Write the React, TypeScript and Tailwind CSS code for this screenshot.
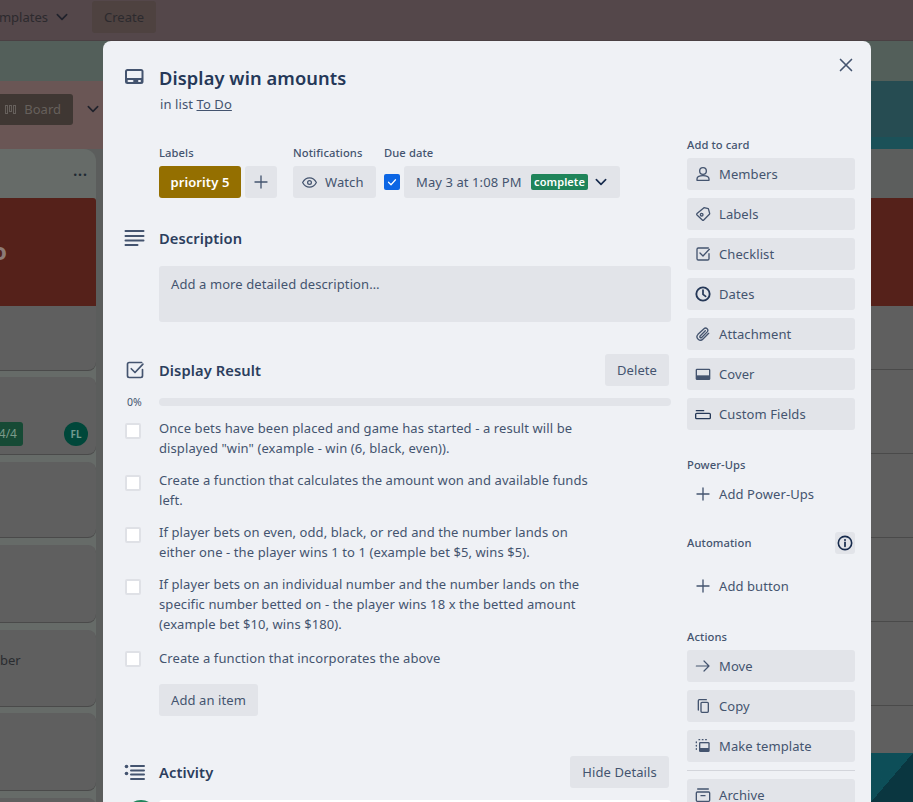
import React from "react";

const S = ({ children, size = 20, className = "" }: { children: React.ReactNode; size?: number; className?: string }) => (
  <svg width={size} height={size} viewBox="0 0 24 24" fill="none" className={className}>{children}</svg>
);
const stroke = { stroke: "currentColor", strokeWidth: 2, strokeLinecap: "round" as const, strokeLinejoin: "round" as const };

const CardIcon = () => (
  <S size={24}><rect x="2" y="3" width="18.5" height="15" rx="2.5" fill="currentColor" /><rect x="4" y="5" width="14.5" height="7" rx="0.5" fill="#eff1f5" /><rect x="4.5" y="14" width="6" height="2" rx="1" fill="#eff1f5" /><rect x="15" y="14" width="3" height="2" rx="1" fill="#eff1f5" /></S>
);
const Person = () => (
  <S size={16}><circle cx="12" cy="7.5" r="5" {...stroke} /><path d="M3 21.5v-2c0-3 3-5 9-5s9 2 9 5v2z" {...stroke} /></S>
);
const Tag = () => (
  <S size={16}><path d="M13.5 2.5l6.5 1.5 2 7a1.5 1.5 0 0 1-.4 1.4l-8.5 8.6a1.5 1.5 0 0 1-2.1 0l-8-7.6a1.5 1.5 0 0 1 0-2.1z" {...stroke} /><circle cx="10" cy="13" r="2" {...stroke} /></S>
);
const Check = ({ size = 16 }: { size?: number }) => (
  <S size={size}><path d="M21 11.5V19a2 2 0 0 1-2 2H5a2 2 0 0 1-2-2V5a2 2 0 0 1 2-2h15" {...stroke} /><path d="M7.5 10.5l4.5 4.5 9.5-10" {...stroke} /></S>
);
const Clock = () => (
  <S size={16}><circle cx="12" cy="12" r="10" {...stroke} strokeWidth={2.8} /><path d="M12 6v6.5l4 3" {...stroke} strokeWidth={2.6} /></S>
);
const Clip = () => (
  <S size={16}><path d="M20.5 11l-8.5 8.5a5 5 0 0 1-7.5-7L13.5 4a3.4 3.4 0 0 1 4.8 4.8l-8.3 8.4a1.6 1.6 0 0 1-2.3-2.3L15.5 7" {...stroke} /></S>
);
const Cover = () => (
  <S size={16}><rect x="1" y="4" width="22" height="17" rx="2" fill="currentColor" /><rect x="3" y="6" width="18" height="8" fill="#e2e4e9" /></S>
);
const Fields = () => (
  <S size={16}><path d="M2 7h11" {...stroke} /><rect x="1" y="11" width="22" height="8" rx="1.5" {...stroke} /></S>
);
const Plus = ({ size = 16 }: { size?: number }) => (
  <S size={size}><path d="M12 3v18M3 12h18" {...stroke} /></S>
);
const Arrow = () => (
  <S size={16}><path d="M2 12h19M13.5 4.5L21 12l-7.5 7.5" {...stroke} strokeWidth={1.8} /></S>
);
const Copy = () => (
  <S size={16}><path d="M5 18V4a1.5 1.5 0 0 1 1.5-1.5H17" {...stroke} /><rect x="9" y="6.5" width="11" height="15" rx="1.5" {...stroke} /></S>
);
const Template = () => (
  <S size={16}><rect x="6" y="6" width="16" height="15" rx="2" fill="currentColor" /><rect x="8" y="8" width="12" height="7" fill="#e2e4e9" /><path d="M2 6v1M2 11v1M2 16v1M6 2.5h1M11 2.5h1M16 2.5h1" {...stroke} /></S>
);
const Archive = () => (
  <S size={16}><path d="M4 3h16" {...stroke} /><rect x="2" y="7.5" width="20" height="14" rx="1.5" {...stroke} /><path d="M9 13h6" {...stroke} /></S>
);
const Chevron = ({ size = 16 }: { size?: number }) => (
  <S size={size}><path d="M5 8.5l7 7 7-7" {...stroke} strokeWidth={2.4} /></S>
);
const Lines = () => (
  <S size={24}><path d="M2.5 5h18M2.5 10h18M2.5 14.5h18M2.5 19h12" {...stroke} /></S>
);

const Side = ({ icon, label, iconClass = "text-[#44546f]" }: { icon: React.ReactNode; label: string; iconClass?: string }) => (
  <div className="flex h-8 w-[168px] items-center gap-2 rounded-[3px] bg-[#e2e4e9] px-2 text-[13px] text-[#44546f]">
    <span className={`flex w-4 justify-center ${iconClass}`}>{icon}</span>
    <span className="pt-[2px]">{label}</span>
  </div>
);
const Ghost = ({ label }: { label: string }) => (
  <div className="flex h-8 w-[168px] items-center gap-2 px-2 text-[13px] text-[#44546f]">
    <span className="flex w-4 justify-center"><Plus /></span>
    <span className="pt-[2px]">{label}</span>
  </div>
);
const Heading = ({ children, className = "" }: { children: React.ReactNode; className?: string }) => (
  <div className={`text-[11.2px] font-medium leading-4 text-[#44546f] ${className}`}>{children}</div>
);

const items: { lines: string[]; mt: string; box: string }[] = [
  { lines: ["Once bets have been placed and game has started - a result will be", 'displayed "win" (example - win (6, black, even)).'], mt: "mt-[8px]", box: "mt-[5px]" },
  { lines: ["Create a function that calculates the amount won and available funds", "left."], mt: "mt-[12px]", box: "mt-[5px]" },
  { lines: ["If player bets on even, odd, black, or red and the number lands on", "either one - the player wins 1 to 1 (example bet $5, wins $5)."], mt: "mt-[12px]", box: "mt-[5px]" },
  { lines: ["If player bets on an individual number and the number lands on the", "specific number betted on - the player wins 18 x the betted amount", "(example bet $10, wins $180)."], mt: "mt-[12px]", box: "mt-[5px]" },
  { lines: ["Create a function that incorporates the above"], mt: "mt-[14px]", box: "mt-[3px]" },
];

const Background = () => (
  <div className="flex h-[802px] w-[913px] flex-col bg-[#5b5d5c]">
    <div className="flex h-[41px] shrink-0 items-center border-b border-[#4a4043] bg-[#54474a] pb-[7px] text-[13px] text-[#2c2a2e]">
      <div className="flex w-[48px] justify-end overflow-hidden whitespace-nowrap pt-[2px]">Templates</div>
      <span className="ml-[6px] text-[#20222c]"><Chevron /></span>
      <div className="ml-[22px] flex h-8 w-16 items-center justify-center rounded-[3px] bg-[#4e4240] pt-[2px]">Create</div>
    </div>
    <div className="flex h-[40px] shrink-0 bg-[#535f5a]" />
    <div className="flex h-[68px] shrink-0 bg-[#6a5655]">
      <div className="mt-[13px] flex h-[31px] w-[73px] items-center justify-end gap-[8px] rounded-r-[3px] bg-[#3f3733] pr-[12px] text-[13px] text-[#66605c]">
        <span className="flex gap-[1px]"><i className="h-[9px] w-[3px] border border-[#66605c]" /><i className="h-[7px] w-[3px] border border-[#66605c]" /><i className="h-[9px] w-[3px] border border-[#66605c]" /></span>
        Board
      </div>
      <span className="ml-[12px] mt-[20px] text-[#20222c]"><Chevron /></span>
      <div className="ml-auto flex h-full w-[42px] flex-col">
        <div className="h-[56px] bg-[#264c52]" />
        <div className="h-[12px] bg-[#1b5158]" />
      </div>
    </div>
    <div className="flex flex-1 justify-between overflow-hidden">
      <div className="flex w-[96px] flex-col">
        <div className="flex h-[49px] shrink-0 justify-end rounded-tr-xl bg-[#666b68] pr-[8px] pt-[14px] text-[#1f2a33]">
          <span className="text-sm font-bold leading-4 tracking-[1px]">...</span>
        </div>
        <div className="flex shrink-0 flex-col gap-[7px] bg-[#666b68] pb-[8px]">
          <div className="h-[172px] shrink-0 rounded-r-lg bg-[#5f5f5f] shadow-[0_1px_0_#4a4a4a]">
            <div className="flex h-[108px] items-center rounded-tr-[3px] bg-[#55211a] pb-[2px] text-2xl font-bold text-[#8c7b76]"><span className="-ml-[8px]">o</span></div>
          </div>
          <div className="flex h-[77px] shrink-0 items-end justify-between rounded-r-lg bg-[#5f5f5f] pb-[8px] pr-[8px] shadow-[0_1px_0_#4a4a4a]">
            <span className="flex h-6 w-[23px] items-center justify-end rounded-r-[3px] bg-[#164a35] pr-[6px] text-xs text-[#7a9a8a]">4/4</span>
            <span className="flex h-6 w-6 items-center justify-center rounded-full bg-[#00473a] text-[10px] font-bold text-[#6f9a8f]">FL</span>
          </div>
          <div className="mt-px h-[75px] shrink-0 rounded-r-lg bg-[#5f5f5f] shadow-[0_1px_0_#4a4a4a]" />
          <div className="mt-px h-[77px] shrink-0 rounded-r-lg bg-[#5f5f5f] shadow-[0_1px_0_#4a4a4a]" />
          <div className="mt-px h-[76px] shrink-0 rounded-r-lg bg-[#5f5f5f] pt-[22px] text-[13px] leading-4 text-[#2a2c30] shadow-[0_1px_0_#4a4a4a]">ber</div>
          <div className="h-[77px] shrink-0 rounded-r-lg bg-[#5f5f5f] shadow-[0_1px_0_#4a4a4a]" />
          <div className="mt-px h-[40px] shrink-0 rounded-r-lg bg-[#5f5f5f]" />
        </div>
      </div>
      <div className="flex w-[42px] flex-col">
        <div className="h-[49px] shrink-0 bg-[#5c5e5d]" />
        <div className="h-[108px] shrink-0 bg-[#55211a]" />
        <div className="h-[64px] shrink-0 border-b border-[#4a4a4a] bg-[#5f5f5f]" />
        <div className="h-[84px] shrink-0 border-b border-[#4a4a4a] bg-[#5f5f5f]" />
        <div className="h-[84px] shrink-0 border-b border-[#4a4a4a] bg-[#5f5f5f]" />
        <div className="h-[84px] shrink-0 border-b border-[#4a4a4a] bg-[#5f5f5f]" />
        <div className="h-[84px] shrink-0 border-b border-[#4a4a4a] bg-[#5f5f5f]" />
        <div className="h-[47px] shrink-0 bg-[#5f5f5f]" />
        <div className="flex-1 bg-gradient-to-br from-[#0d4e58] from-50% to-[#0a3640] to-50%" />
      </div>
    </div>
  </div>
);

const Modal = () => (
  <div className="absolute left-[103px] top-[41px] flex h-[761px] w-[768px] overflow-hidden rounded-t-[8px] bg-[#eff1f5] tracking-[0.09px] text-[#172b4d]">
    <div className="absolute right-[14px] top-[13px] text-[#44546f]">
      <S size={22}><path d="M6 6l12 12M18 6L6 18" {...stroke} strokeWidth={1.8} /></S>
    </div>
    <div className="w-[584px] shrink-0 pl-[20px] pr-[16px]">
      <div className="mt-[25px] flex items-center gap-[10px]">
        <span className="flex w-[26px] text-[#44546f]"><CardIcon /></span>
        <div className="text-[18.3px] font-semibold leading-6 text-[#253858]">Display win amounts</div>
      </div>
      <div className="ml-[37px] mt-[4px] text-[13px] leading-5 text-[#44546f]">in list <span className="underline">To Do</span></div>
      <div className="ml-[36px] mt-[31px] flex">
        <div>
          <Heading>Labels</Heading>
          <div className="mt-[5px] flex gap-1">
            <div className="flex h-8 w-[82px] items-center justify-center rounded-[3px] bg-[#946f00] pt-[2px] text-[13px] font-semibold text-white">priority 5</div>
            <div className="flex h-8 w-8 items-center justify-center rounded-[3px] bg-[#e2e4e9] text-[#44546f]"><Plus /></div>
          </div>
        </div>
        <div className="ml-4">
          <Heading>Notifications</Heading>
          <div className="mt-[5px] flex h-8 w-[83px] items-center gap-[8px] rounded-[3px] bg-[#e2e4e9] pl-[9px] text-[13px] text-[#44546f]">
            <S size={15}><path d="M1 12s4-7.5 11-7.5S23 12 23 12s-4 7.5-11 7.5S1 12 1 12z" {...stroke} /><circle cx="12" cy="12" r="3" {...stroke} /></S>
            <span className="pt-[2px]">Watch</span>
          </div>
        </div>
        <div className="ml-2">
          <Heading>Due date</Heading>
          <div className="mt-[5px] flex items-center gap-1">
            <div className="flex h-4 w-4 items-center justify-center rounded-[2px] bg-[#0c66e4] text-white">
              <S size={12}><path d="M5 12.5l5 5 9-10" {...stroke} strokeWidth={2.4} /></S>
            </div>
            <div className="flex h-8 w-[216px] items-center rounded-[3px] bg-[#e2e4e9] pl-[12px] text-[13px] text-[#44546f]">
              <span className="w-[115px] whitespace-nowrap pt-[2px]">May 3 at 1:08 PM</span>
              <span className="flex h-4 w-[57px] items-center justify-center rounded-[2px] bg-[#1f845a] text-[11px] font-semibold text-white">complete</span>
              <span className="ml-[5px] text-[#172b4d]"><Chevron /></span>
            </div>
          </div>
        </div>
      </div>
      <div className="mt-[28px] flex items-center gap-[10px]">
        <span className="flex w-[26px] text-[#44546f]"><Lines /></span>
        <div className="text-[14.7px] font-semibold leading-6 text-[#2c3e5d]">Description</div>
      </div>
      <div className="ml-[36px] mt-[16px] h-14 rounded-[3px] bg-[#e2e4e9] px-3 py-2 text-[13px] leading-5 text-[#44546f]">Add a more detailed description…</div>
      <div className="mt-[32px] flex h-8 items-center gap-[10px]">
        <span className="-ml-[2px] flex w-[28px] justify-center text-[#44546f]"><Check size={20} /></span>
        <div className="text-[14.7px] font-semibold leading-6 text-[#2c3e5d]">Display Result</div>
        <div className="ml-auto mr-[2px] flex h-8 w-16 items-center justify-center rounded-[3px] bg-[#e2e4e9] pt-[2px] text-[13px] text-[#44546f]">Delete</div>
      </div>
      <div className="mt-[8px] flex items-center">
        <span className="w-[36px] text-[10.5px] leading-4 text-[#44546f]"><span className="ml-[4px]">0%</span></span>
        <div className="h-2 flex-1 rounded-[4px] bg-[#e2e4e9]" />
      </div>
      {items.map((it) => (
        <div key={it.lines[0]} className={`flex ${it.mt}`}>
          <div className={`ml-[2px] h-4 w-4 shrink-0 rounded-[2px] border-2 border-[#dfe1e6] bg-white ${it.box}`} />
          <div className="ml-[18px] text-[13px] leading-5 text-[#44546f]">
            {it.lines.map((l) => <div key={l} className="whitespace-nowrap">{l}</div>)}
          </div>
        </div>
      ))}
      <div className="ml-[36px] mt-[16px] flex h-8 w-[99px] items-center justify-center rounded-[3px] bg-[#e2e4e9] pt-[2px] text-[13px] text-[#44546f]">Add an item</div>
      <div className="mt-[40px] flex h-8 items-center gap-[10px]">
        <span className="-ml-[2px] flex w-[28px] justify-center text-[#44546f]">
          <S size={24}><path d="M8 6h13M8 10.5h13M8 14.5h13M8 19h13" {...stroke} /><circle cx="3.5" cy="6.5" r="1.8" fill="currentColor" /><circle cx="3.5" cy="13.5" r="1.8" fill="currentColor" /></S>
        </span>
        <div className="text-[14.7px] font-semibold leading-6 text-[#2c3e5d]">Activity</div>
        <div className="ml-auto mr-[2px] flex h-8 w-[99px] items-center justify-center rounded-[3px] bg-[#e2e4e9] pt-[2px] text-[13px] text-[#44546f]">Hide Details</div>
      </div>
      <div className="mt-[12px] flex">
        <div className="ml-[2px] h-8 w-8 shrink-0 rounded-full bg-[#1f845a]" />
        <div className="ml-[2px] h-10 flex-1 rounded-[3px] bg-white shadow-[0_1px_1px_#c5c9d0]" />
      </div>
    </div>
    <div className="w-[168px] shrink-0">
      <Heading className="mt-[96px]">Add to card</Heading>
      <div className="mt-[5px] flex flex-col gap-2">
        <Side icon={<Person />} label="Members" />
        <Side icon={<Tag />} label="Labels" />
        <Side icon={<Check />} label="Checklist" />
        <Side icon={<Clock />} iconClass="text-[#253858]" label="Dates" />
        <Side icon={<Clip />} label="Attachment" />
        <Side icon={<Cover />} label="Cover" />
        <Side icon={<Fields />} iconClass="text-[#253858]" label="Custom Fields" />
      </div>
      <Heading className="mt-[27px]">Power-Ups</Heading>
      <div className="mt-[5px]"><Ghost label="Add Power-Ups" /></div>
      <div className="mt-[22px] flex h-[22px] items-center justify-between">
        <Heading>Automation</Heading>
        <span className="flex h-[22px] w-5 items-center justify-center rounded-[3px] bg-[#e2e4e9] text-[#172b4d]">
          <S size={16}><circle cx="12" cy="12" r="10" {...stroke} strokeWidth={2.4} /><path d="M12 11v6" {...stroke} strokeWidth={2.6} /><circle cx="12" cy="7.5" r="1.5" fill="currentColor" /></S>
        </span>
      </div>
      <div className="mt-[16px]"><Ghost label="Add button" /></div>
      <Heading className="mt-[27px]">Actions</Heading>
      <div className="mt-[5px] flex flex-col gap-2">
        <Side icon={<Arrow />} label="Move" />
        <Side icon={<Copy />} label="Copy" />
        <Side icon={<Template />} label="Make template" />
      </div>
      <div className="mt-[8px] h-px bg-[#d3d5db]" />
      <div className="mt-[8px]"><Side icon={<Archive />} label="Archive" /></div>
    </div>
  </div>
);

export default function App() {
  return (
    <div className="relative h-[802px] w-[913px] overflow-hidden font-['Noto_Sans',sans-serif]">
      <Background />
      <Modal />
    </div>
  );
}
